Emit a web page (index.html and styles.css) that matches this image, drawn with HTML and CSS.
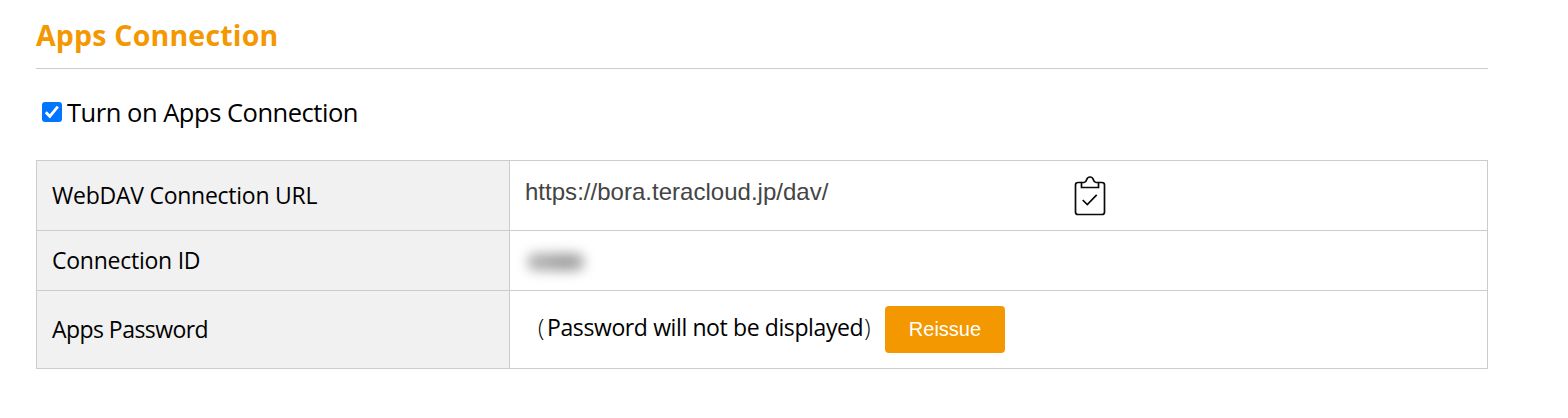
FILE: index.html
```html
<!DOCTYPE html>
<html lang="en">
<head>
<meta charset="utf-8">
<title>Apps Connection</title>
<link rel="stylesheet" href="styles.css">
</head>
<body>
<main class="panel">
  <h2 class="title">Apps Connection</h2>
  <label class="toggle">
    <svg class="check" viewBox="0 0 20 20"><rect width="20" height="20" rx="3" fill="#0075ff"/><path d="M3.800 10.300 7.800 14.300 15.800 4.600" fill="none" stroke="#fff" stroke-width="2.800"/></svg>
    <span class="toggle-text">Turn on Apps Connection</span>
  </label>
  <div class="table">
    <div class="row row-url">
      <div class="head">WebDAV Connection URL</div>
      <div class="cell">
        <span class="url">https://bora.teracloud.jp/dav/</span>
        <svg class="copy" viewBox="0 0 32 40" fill="none" stroke="#0a0a0a" stroke-width="1.700"><path d="M7.500 6.500H4Q1.500 6.500 1.500 9V36Q1.500 38.500 4 38.500H28Q30.500 38.500 30.500 36V9Q30.500 6.500 28 6.500H24.500"/><path d="M7.500 11.500V6.500H10Q12 6.300 12.500 4Q13.300 1 16 1Q18.700 1 19.500 4Q20 6.300 22 6.500H24.500V11.500Z"/><path d="M8.700 24 13.300 28.500 22.700 18.800"/></svg>
      </div>
    </div>
    <div class="row row-id">
      <div class="head">Connection ID</div>
      <div class="cell"><span class="redacted"></span></div>
    </div>
    <div class="row row-pass">
      <div class="head head-pass">Apps Password</div>
      <div class="cell">
        <span class="note"><span class="paren">(</span><span class="note-text">Password will not be displayed</span><span class="paren paren-end">)</span></span>
        <button class="reissue" type="button">Reissue</button>
      </div>
    </div>
  </div>
</main>
</body>
</html>
```
FILE: styles.css
```css
* { box-sizing: border-box; }
body { margin: 0; background: #fff; color: #000; font-family: "Open Sans", "Noto Sans", sans-serif; }
.panel { width: 1452px; margin-left: 36px; }
.title { margin: 0; height: 69px; padding-top: 14px; border-bottom: 1px solid #ccc; color: #f39800; font-size: 28.5px; line-height: 42px; font-weight: 700; letter-spacing: 0.2px; white-space: nowrap; }
.toggle { display: flex; height: 91px; padding: 24px 0 0 6px; gap: 5px; font-size: 25.5px; line-height: 39px; letter-spacing: -0.47px; white-space: nowrap; }
.check { width: 20px; height: 20px; margin-top: 9px; flex: none; }
.table { border: 1px solid #ccc; height: 209px; font-size: 23px; letter-spacing: -0.25px; white-space: nowrap; }
.row { display: flex; border-bottom: 1px solid #ccc; }
.row:last-child { border-bottom: 0; }
.row-url { height: 70px; }
.row-id { height: 60px; }
.row-pass { height: 77px; }
.head { display: flex; align-items: center; width: 473px; padding: 0 0 2px 15px; background: #f1f1f1; border-right: 1px solid #ccc; flex: none; }
.head-pass { letter-spacing: -0.55px; }
.cell { display: flex; flex: 1; padding-left: 15px; }
.url { width: 549px; padding-top: 15px; font: 24px/32px "Liberation Sans", Arial, sans-serif; letter-spacing: 0.02px; color: #444; }
.copy { width: 32px; height: 40px; margin-top: 15px; }
.redacted { width: 58px; height: 18px; margin: 22px 0 0 2px; background: linear-gradient(90deg, #bbb, #a0a0a0 70%, #bbb); border-radius: 8px; filter: blur(6px); }
.note { display: flex; width: 360px; padding: 16px 0 0 13px; line-height: 40px; letter-spacing: -0.39px; }
.paren { width: 9px; font-weight: 300; }
.paren-end { margin-left: 1px; }
.reissue { width: 120px; height: 47px; margin-top: 15px; padding: 0; border: 0; border-radius: 4px; background: #f39800; color: #fff; font: 20px "Liberation Sans", Arial, sans-serif; }
```
